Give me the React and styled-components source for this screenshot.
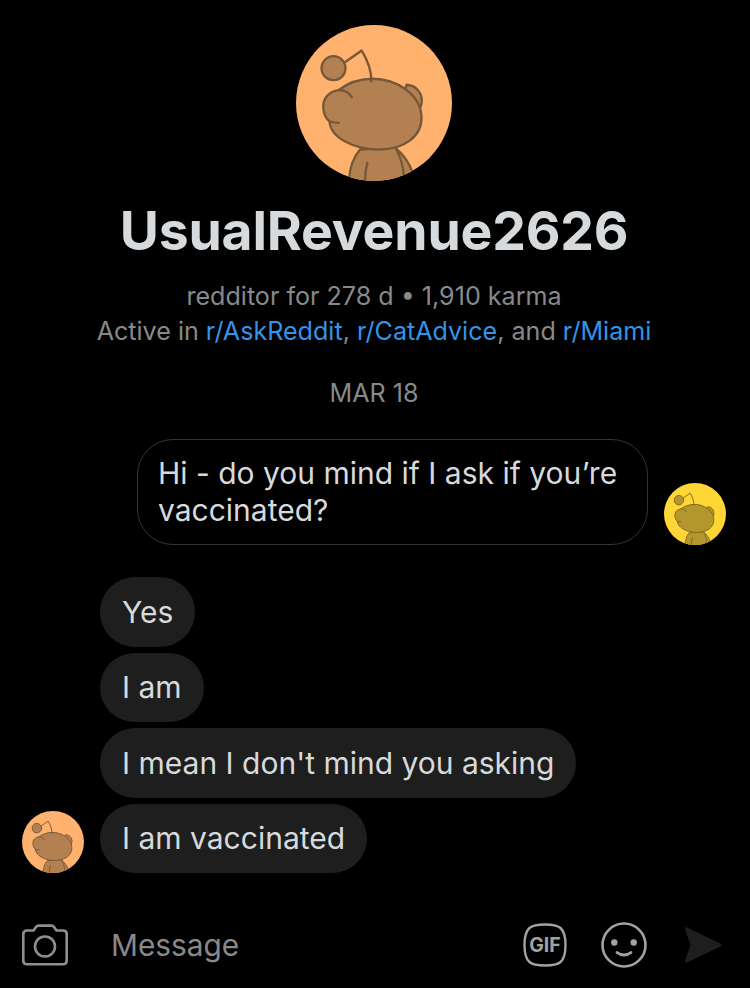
import React from "react";
import styled, { createGlobalStyle } from "styled-components";

const GlobalStyle = createGlobalStyle`
  html, body {
    margin: 0;
    padding: 0;
    background: #000;
  }
  body {
    font-family: Inter, "Liberation Sans", sans-serif;
  }
`;

const Screen = styled.div`
  width: 750px;
  height: 988px;
  background: #000;
  display: flex;
  flex-direction: column;
  overflow: hidden;
`;

const Header = styled.header`
  display: flex;
  flex-direction: column;
  align-items: center;
  padding: 25px 2px 0 0;
`;

const AvatarCircle = styled.svg`
  display: block;
  flex: none;
  width: ${(p) => p.size}px;
  height: ${(p) => p.size}px;
`;

const Username = styled.h1`
  margin: 20px 0 0;
  font-size: 53.5px;
  line-height: 60px;
  font-weight: 700;
  letter-spacing: -0.2px;
  color: #d7dadc;
`;

const Meta = styled.div`
  margin-top: 18px;
  font-size: 25.1px;
  line-height: 35px;
  color: #88898b;
  text-align: center;
`;

const SubLink = styled.span`
  color: #3394e8;
`;

const DateLabel = styled.div`
  margin-top: 29px;
  font-size: 25.1px;
  line-height: 30px;
  color: #88898b;
  text-align: center;
`;

const Thread = styled.section`
  display: flex;
  flex-direction: column;
  margin-top: 31px;
`;

const OutgoingRow = styled.div`
  display: flex;
  justify-content: flex-end;
  align-items: flex-end;
  gap: 16px;
  padding-right: 24px;
`;

const OutgoingBubble = styled.div`
  box-sizing: border-box;
  width: 511px;
  height: 106px;
  padding: 15px 20px;
  border: 1.5px solid #343536;
  border-radius: 36px;
  font-size: 30px;
  line-height: 37px;
  color: #d7dadc;
`;

const IncomingGroup = styled.div`
  display: flex;
  flex-direction: column;
  align-items: flex-start;
  gap: 6px;
  margin-top: 32px;
  padding-left: 22px;
`;

const IncomingRow = styled.div`
  display: flex;
  align-items: flex-end;
  gap: 16px;
  padding-left: ${(p) => (p.$withAvatar ? 0 : 78)}px;
`;

const IncomingBubble = styled.div`
  height: 69.5px;
  padding: 0 22px;
  display: flex;
  align-items: center;
  border-radius: 35px;
  background: #1e1e1e;
  font-size: 30px;
  color: #d7dadc;
  white-space: nowrap;
`;

const Composer = styled.footer`
  display: flex;
  align-items: center;
  margin-top: 46px;
  height: 52px;
  padding: 0 28px 0 22px;
`;

const Placeholder = styled.div`
  flex: 1;
  margin-left: 43px;
  font-size: 29.8px;
  color: #88898b;
`;

const ComposerIcon = styled.svg`
  display: block;
  flex: none;
  margin-left: ${(p) => p.$gap || 0}px;
`;

const GifText = styled.text`
  font-family: Inter, "Liberation Sans", sans-serif;
  font-size: 19.5px;
  font-weight: 700;
  fill: #a0a3a5;
`;

function Snoo({ size, bg, fill, stroke, id }) {
  return (
    <AvatarCircle size={size} viewBox="47 45 470 470">
      <defs>
        <clipPath id={id}>
          <circle cx="282" cy="280" r="235" />
        </clipPath>
      </defs>
      <circle cx="282" cy="280" r="235" fill={bg} />
      <g clipPath={`url(#${id})`} fill={fill} stroke={stroke} strokeWidth="7" strokeLinecap="round" strokeLinejoin="round">
        <path d="M206 530 C206 480 218 445 240 420 L345 414 C370 435 390 462 400 495 L400 530 Z" />
        <path fill="none" d="M262 460 C257 478 255 495 255 515 M350 420 C362 445 370 470 372 498" />
        <path d="M380 225 C408 226 427 250 426 275 C425 290 420 298 414 304 L370 260 Z" />
        <path d="M148 335 C150 385 225 422 300 420 C375 418 428 380 425 320 C422 255 350 206 275 207 C235 208 200 222 175 241 C148 245 128 265 129 292 C130 312 138 328 148 335 Z" />
        <path fill="none" d="M215 262 C205 247 190 240 175 241 M148 335 C155 338 165 340 176 340" />
        <path fill="none" d="M190 160 L245 122 C262 150 275 180 274 215" />
        <circle cx="160" cy="175" r="36" />
      </g>
    </AvatarCircle>
  );
}

function CameraIcon() {
  return (
    <ComposerIcon width="46" height="42" viewBox="0 0 46 42" fill="none" stroke="#8d9092" strokeWidth="2.6" strokeLinejoin="round">
      <path d="M5 6.5 H11.5 L14 3 C14.7 2 15.5 1.6 16.5 1.6 H29.5 C30.5 1.6 31.3 2 32 3 L34.5 6.5 H41 C43.2 6.5 44.7 8 44.7 10.2 V36.5 C44.7 38.8 43.2 40.3 41 40.3 H5 C2.8 40.3 1.3 38.8 1.3 36.5 V10.2 C1.3 8 2.8 6.5 5 6.5 Z" />
      <circle cx="23" cy="22.5" r="10" />
    </ComposerIcon>
  );
}

function GifIcon() {
  return (
    <ComposerIcon $gap={0} width="44" height="44" viewBox="0 0 44 44" fill="none">
      <path d="M22 1.5 C29 1.5 34 2 37.5 5 C41 8 42.5 14 42.5 22 C42.5 30 41 36 37.5 39 C34 42 29 42.5 22 42.5 C15 42.5 10 42 6.5 39 C3 36 1.5 30 1.5 22 C1.5 14 3 8 6.5 5 C10 2 15 1.5 22 1.5 Z" stroke="#a0a3a5" strokeWidth="2.4" />
      <GifText x="22" y="29" textAnchor="middle">GIF</GifText>
    </ComposerIcon>
  );
}

function SmileIcon() {
  return (
    <ComposerIcon $gap={34} width="46" height="46" viewBox="0 0 46 46" fill="none">
      <circle cx="23" cy="23" r="21.5" stroke="#a0a3a5" strokeWidth="2.6" />
      <circle cx="13.3" cy="20.5" r="3.2" fill="#a0a3a5" />
      <circle cx="32.7" cy="20.5" r="3.2" fill="#a0a3a5" />
      <path d="M16 30.5 C20 33.8 26 33.8 30 30.5" stroke="#a0a3a5" strokeWidth="2.8" strokeLinecap="round" />
    </ComposerIcon>
  );
}

function SendIcon() {
  return (
    <ComposerIcon $gap={37} width="38" height="38" viewBox="0 0 38 38">
      <path d="M3 1.5 L36.5 17.5 C38 18.3 38 19.7 36.5 20.5 L3 36.5 C1.5 37 0.5 36 1 34.5 L6.5 19 L1 3.5 C0.5 2 1.5 1 3 1.5 Z" fill="#1e1e1e" />
    </ComposerIcon>
  );
}

export default function App() {
  return (
    <Screen>
      <GlobalStyle />
      <Header>
        <Snoo id="snoo-main" size={156} bg="#ffb26e" fill="#b38051" stroke="#765737" />
        <Username>UsualRevenue2626</Username>
        <Meta>
          redditor for 278 d • 1,910 karma
          <br />
          Active in <SubLink>r/AskReddit</SubLink>, <SubLink>r/CatAdvice</SubLink>, and <SubLink>r/Miami</SubLink>
        </Meta>
        <DateLabel>MAR 18</DateLabel>
      </Header>
      <Thread>
        <OutgoingRow>
          <OutgoingBubble>Hi - do you mind if I ask if you’re vaccinated?</OutgoingBubble>
          <Snoo id="snoo-me" size={62} bg="#ffd635" fill="#b3962d" stroke="#7d6a24" />
        </OutgoingRow>
        <IncomingGroup>
          <IncomingRow>
            <IncomingBubble>Yes</IncomingBubble>
          </IncomingRow>
          <IncomingRow>
            <IncomingBubble>I am</IncomingBubble>
          </IncomingRow>
          <IncomingRow>
            <IncomingBubble>I mean I don't mind you asking</IncomingBubble>
          </IncomingRow>
          <IncomingRow $withAvatar>
            <Snoo id="snoo-them" size={62} bg="#ffb26e" fill="#b38051" stroke="#765737" />
            <IncomingBubble>I am vaccinated</IncomingBubble>
          </IncomingRow>
        </IncomingGroup>
      </Thread>
      <Composer>
        <CameraIcon />
        <Placeholder>Message</Placeholder>
        <GifIcon />
        <SmileIcon />
        <SendIcon />
      </Composer>
    </Screen>
  );
}
